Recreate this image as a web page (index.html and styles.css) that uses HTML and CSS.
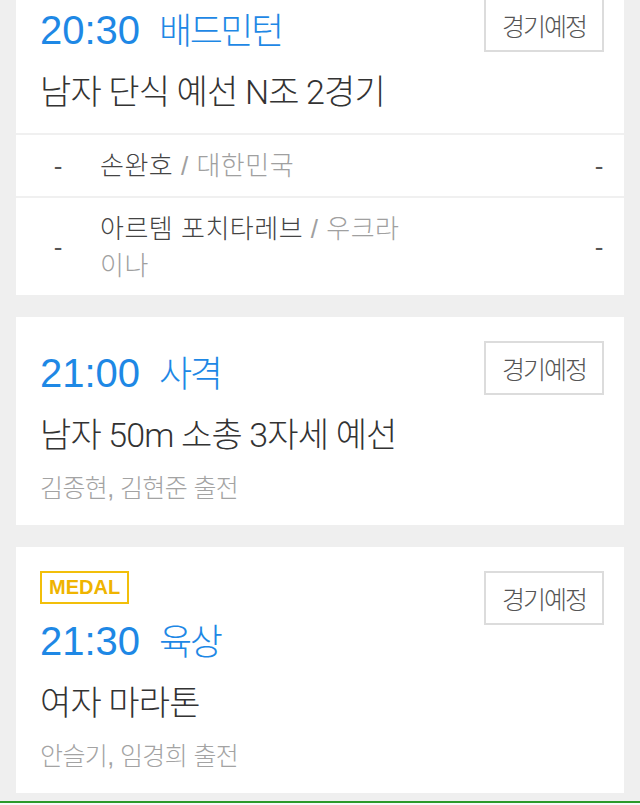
FILE: index.html
```html
<!DOCTYPE html>
<html lang="ko">
<head>
<meta charset="utf-8">
<title>경기 일정</title>
<link rel="stylesheet" href="styles.css">
</head>
<body>
<div class="list">
  <section class="card">
    <div class="main">
      <div class="head">
        <div class="left">
          <div class="when"><span class="time">20:30</span><span class="sport">배드민턴</span></div>
        </div>
        <div class="status">경기예정</div>
      </div>
      <div class="title">남자 단식 예선 N조 2경기</div>
    </div>
    <div class="row">
      <div class="dash">-</div>
      <div class="player"><span class="name">손완호</span><span class="nation"> / 대한민국</span></div>
      <div></div>
      <div class="dash">-</div>
    </div>
    <div class="row">
      <div class="dash">-</div>
      <div class="player"><span class="name">아르템 포치타레브</span><span class="nation"> / 우크라이나</span></div>
      <div></div>
      <div class="dash">-</div>
    </div>
  </section>

  <section class="card">
    <div class="main">
      <div class="head">
        <div class="left">
          <div class="when"><span class="time">21:00</span><span class="sport">사격</span></div>
        </div>
        <div class="status">경기예정</div>
      </div>
      <div class="title">남자 50m 소총 3자세 예선</div>
      <div class="players">김종현, 김현준 출전</div>
    </div>
  </section>

  <section class="card">
    <div class="main">
      <div class="head">
        <div class="left">
          <div class="medal">MEDAL</div>
          <div class="when"><span class="time">21:30</span><span class="sport">육상</span></div>
        </div>
        <div class="status">경기예정</div>
      </div>
      <div class="title">여자 마라톤</div>
      <div class="players">안슬기, 임경희 출전</div>
    </div>
  </section>
</div>
<div class="tabbar"></div>
</body>
</html>
```

FILE: styles.css
```css
html, body {
  margin: 0;
  padding: 0;
  background: #efefef;
}

body {
  font-family: "Liberation Sans", "Noto Sans CJK KR", sans-serif;
  color: #333;
  overflow: hidden;
  height: 805px;
}

.list {
  display: flex;
  flex-direction: column;
  gap: 22px;
  margin-top: -26px;
}

.card {
  background: #fff;
  margin: 0 16px;
}

.main {
  padding: 24px 20px 22px 24px;
}

.card:first-child .main {
  padding-bottom: 21px;
}

.head {
  display: flex;
  justify-content: space-between;
  align-items: flex-start;
}

.medal {
  width: fit-content;
  border: 2px solid #f2bf0a;
  color: #efb400;
  font-family: "Liberation Sans", sans-serif;
  font-weight: bold;
  font-size: 20px;
  line-height: 29px;
  padding: 0 7px;
  margin-bottom: 8px;
}

.when {
  margin-top: 3px;
  font-family: "Liberation Sans", sans-serif;
  font-size: 40px;
  line-height: 54px;
  white-space: nowrap;
  color: #1e88e5;
}

.time {
  font-family: "Liberation Sans", sans-serif;
  font-size: 40px;
}

.sport {
  font-family: "Noto Sans CJK KR", sans-serif;
  font-weight: 300;
  font-size: 36px;
  letter-spacing: -2.5px;
  margin-left: 19px;
}

.status {
  box-sizing: border-box;
  width: 120px;
  height: 54px;
  border: 2px solid #dcdcdc;
  display: flex;
  align-items: center;
  justify-content: center;
  font-family: "Noto Sans CJK KR", sans-serif;
  font-weight: 300;
  font-size: 25px;
  letter-spacing: -2px;
  color: #555;
  flex: none;
}

.title {
  margin-top: 15px;
  font-family: "Roboto", "Noto Sans CJK KR", sans-serif;
  font-size: 34px;
  font-weight: 300;
  line-height: 40px;
  letter-spacing: -0.85px;
  color: #333;
}

.players {
  margin-top: 18px;
  font-size: 25px;
  font-weight: 300;
  line-height: 30px;
  letter-spacing: -0.6px;
  color: #a3a3a3;
}

.row {
  display: grid;
  grid-template-columns: 84px 310px 1fr 50px;
  align-items: center;
  border-top: 2px solid #f0f0f0;
  padding: 13px 0 10.5px;
}

.dash {
  text-align: center;
  font-size: 26px;
  line-height: 37px;
  color: #555;
}

.player {
  font-size: 26px;
  font-weight: 300;
  line-height: 37px;
  letter-spacing: 0.5px;
}

.name {
  color: #444;
}

.nation {
  color: #a0a0a0;
}

.tabbar {
  margin-top: 8px;
  border-top: 2px solid #2b9a2b;
  height: 60px;
  background: #f7f7f7;
}
```
